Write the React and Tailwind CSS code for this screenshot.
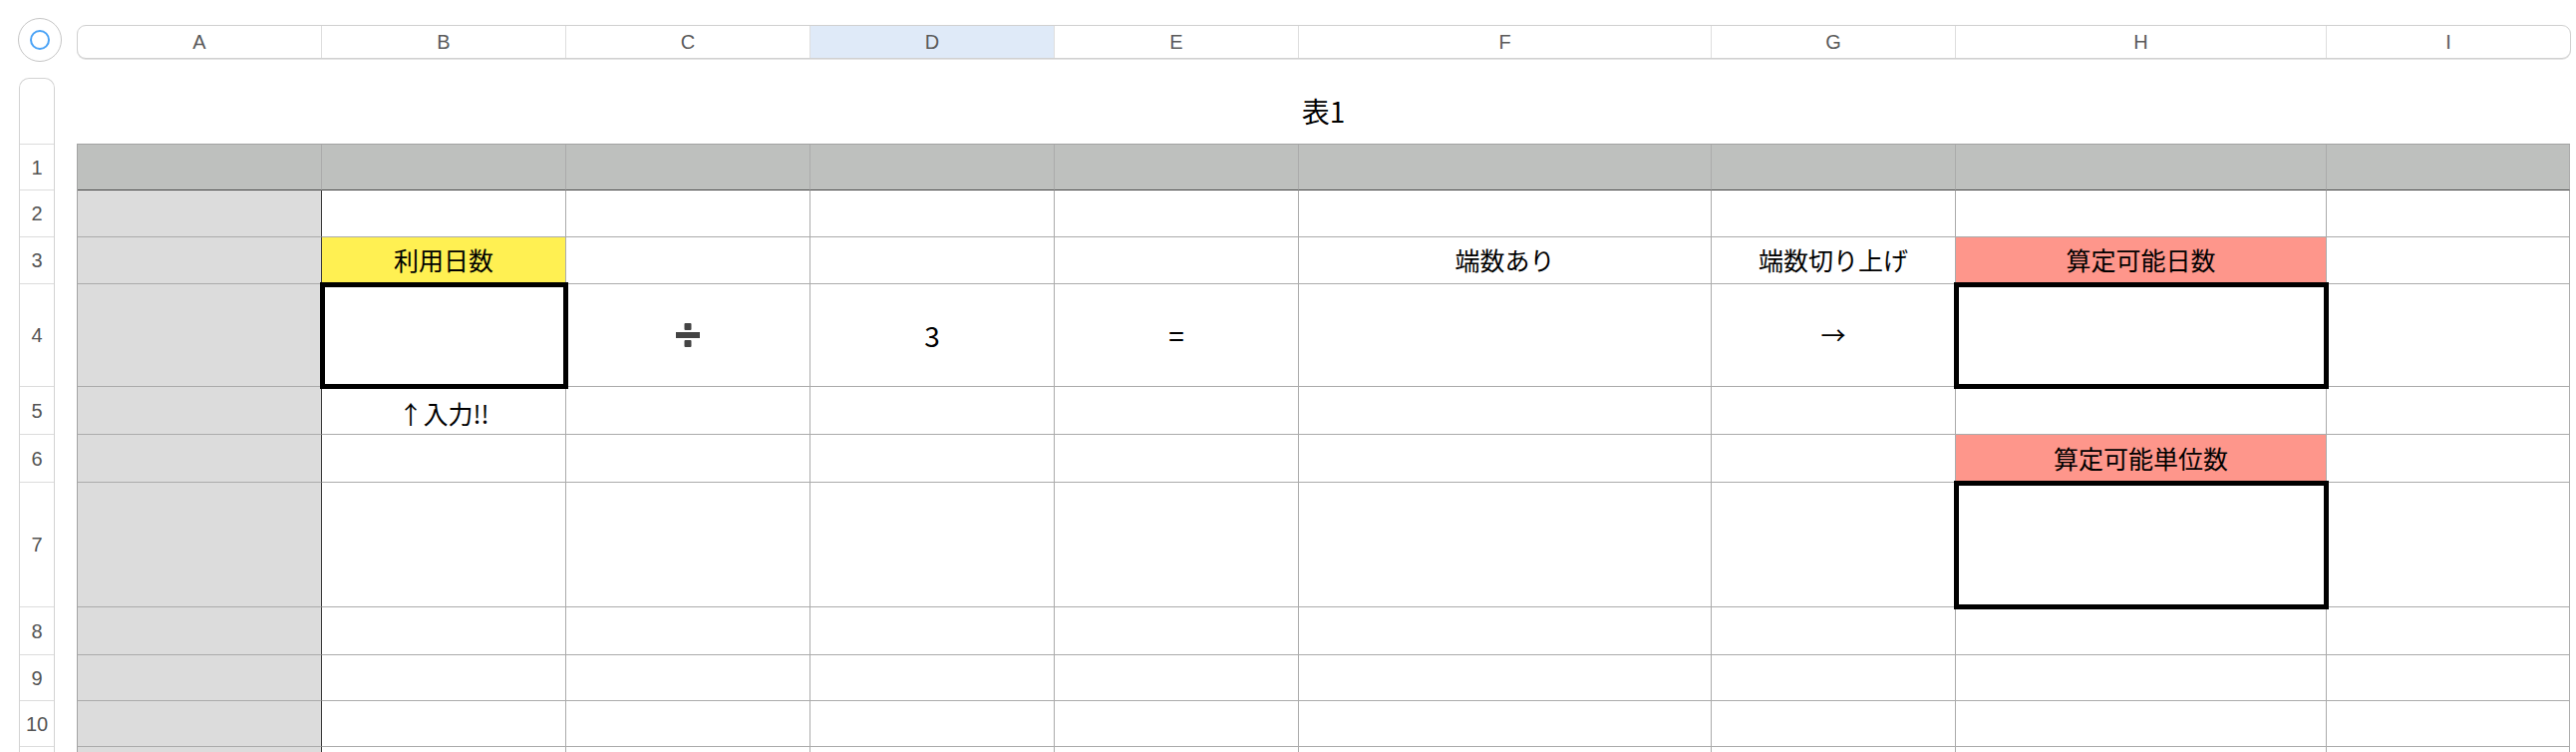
const COLS = ['A', 'B', 'C', 'D', 'E', 'F', 'G', 'H', 'I'];
const ROW_H = [46, 47, 47, 103, 48, 48, 125, 48, 46, 46, 46];

function DivideIcon() {
  return (
    <svg width="24" height="24" viewBox="0 0 24 24" className="text-[#444]">
      <rect x="8.5" y="0" width="7" height="7" rx="1" fill="currentColor" />
      <rect x="0" y="9" width="24" height="6" fill="currentColor" />
      <rect x="8.5" y="17" width="7" height="7" rx="1" fill="currentColor" />
    </svg>
  );
}

// cell contents keyed by "col+row"
const CELLS = {
  B3: { text: '利用日数', bg: 'bg-[#fff052]' },
  B4: { box: true },
  B5: { text: '↑入力!!', cls: 'mt-[6px] text-[25px] text-black' },
  C4: { icon: <DivideIcon /> },
  D4: { text: '3', cls: 'text-[28px] text-black' },
  E4: { text: '=', cls: 'text-[28px] text-black' },
  F3: { text: '端数あり' },
  G3: { text: '端数切り上げ' },
  G4: { text: '→' },
  H3: { text: '算定可能日数', bg: 'bg-[#fe968b]' },
  H4: { box: true },
  H6: { text: '算定可能単位数', bg: 'bg-[#fe968b]' },
  H7: { box: true },
};

const gridCols = 'grid-cols-[245px_245px_245px_245px_245px_414px_245px_372px_244px]';

function ColumnHeader() {
  return (
    <div
      className={`mt-[7px] ml-[15px] grid ${gridCols} h-[34px] rounded-[9px] border border-[#d0d0d0] bg-white shadow-[0_1px_0_#e4e4e4] overflow-hidden`}
    >
      {COLS.map((c, i) => (
        <div
          key={c}
          className={`flex items-center justify-center text-[20px] text-[#5a5a5a] ${
            i < COLS.length - 1 ? 'border-r border-[#dedede]' : ''
          } ${c === 'D' ? 'bg-[#dfeaf8]' : ''}`}
        >
          {c}
        </div>
      ))}
    </div>
  );
}

function RowHeader() {
  return (
    <div className="ml-[19px] w-[36px] shrink-0 rounded-t-[10px] border border-b-0 border-[#d3d3d3] bg-white">
      <div className="h-[66px] border-b border-[#dcdcdc]" />
      {ROW_H.map((h, i) => (
        <div
          key={i}
          style={{ height: h }}
          className="flex items-center justify-center border-b border-[#dcdcdc] text-[20px] text-[#555]"
        >
          {i < 10 ? i + 1 : ''}
        </div>
      ))}
    </div>
  );
}

function Cell({ col, row }) {
  const id = col + row;
  const cell = CELLS[id] || {};
  const isHeaderRow = row === 1;
  const isHeaderCol = col === 'A' && !isHeaderRow;
  let bg = 'bg-white';
  if (isHeaderRow) bg = 'bg-[#bec0be]';
  else if (isHeaderCol) bg = 'bg-[#dcdcdc]';
  if (cell.bg) bg = cell.bg;

  const borderB = isHeaderRow ? 'border-b-[#474747]' : 'border-b-[#ababab]';
  const borderR = isHeaderCol ? 'border-r-[#3a3a3a]' : 'border-r-[#ababab]';

  return (
    <div
      className={`relative flex items-center justify-center border-r border-b ${borderB} ${borderR} ${bg} ${
        cell.box ? 'z-10 [outline:5px_solid_#000] [outline-offset:-3px]' : ''
      }`}
    >
      {cell.icon}
      {cell.text && (
        <span className={cell.cls || 'text-[25px] text-black'}>{cell.text}</span>
      )}
    </div>
  );
}

export default function App() {
  return (
    <div
      className="w-[2584px] h-[754px] overflow-hidden bg-white pt-[18px]"
      style={{ fontFamily: '"Noto Sans CJK JP", "Liberation Sans", sans-serif' }}
    >
      <div className="flex items-start">
        <div className="ml-[18px] flex h-[44px] w-[44px] items-center justify-center rounded-full border border-[#c6c6c6] bg-white">
          <div className="h-[20px] w-[20px] rounded-full border-2 border-[#4ba3f6]" />
        </div>
        <div style={{ fontFamily: '"Liberation Sans", sans-serif' }}>
          <ColumnHeader />
        </div>
      </div>

      <div className="mt-[16px] flex items-start">
        <div style={{ fontFamily: '"Liberation Sans", sans-serif' }}>
          <RowHeader />
        </div>
        <div className="ml-[22px]">
          <div className="flex h-[66px] items-center justify-center text-[28px] text-black">
            表1
          </div>
          <div
            className={`grid ${gridCols} grid-rows-[46px_47px_47px_103px_48px_48px_125px_48px_46px_46px_46px] border-t border-l border-[#a3a3a3]`}
          >
            {ROW_H.map((_, r) =>
              COLS.map((c) => <Cell key={c + (r + 1)} col={c} row={r + 1} />)
            )}
          </div>
        </div>
      </div>
    </div>
  );
}
